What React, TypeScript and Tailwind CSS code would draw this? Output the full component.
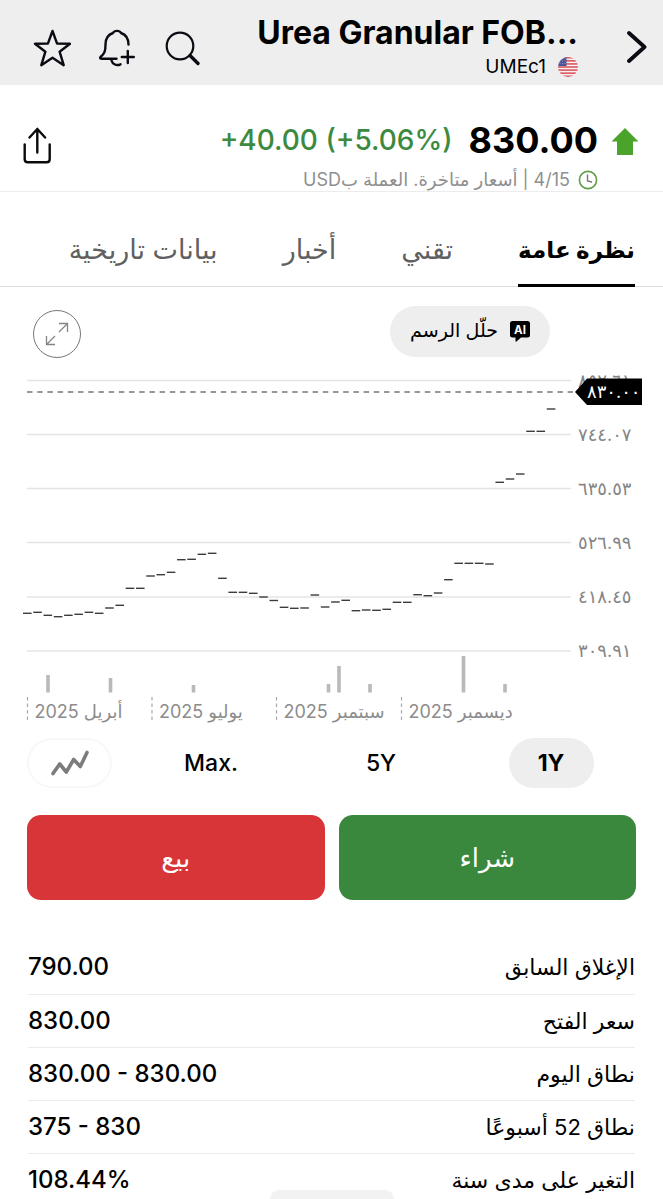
import React from "react";

const closes = [
  613.3, 612.3, 615.3, 616.7, 615.3, 614.3, 612.3, 613.3, 608, 605.3, 588.3, 588.3, 576, 574.7, 572.3, 559.7, 559.3,
  554.3, 553.3, 578.3, 592.3, 592.3, 593.3, 597, 600.5, 607.3, 608.3, 608, 595, 607, 602, 600.3, 610.7, 610, 610.3,
  609.3, 602.3, 602.3, 594.7, 595.7, 593, 579.7, 563.3, 563.3, 563.3, 564, 482.3, 479, 474, 431.3, 431.3, 409,
];

const volumes = [
  [48, 675], [110.5, 678], [193.5, 685], [328.5, 684], [339, 666], [370, 684], [463.5, 656], [505, 684],
];

const levels = [
  { y: 380.5, label: "٨٥٢.٦١" },
  { y: 434.5, label: "٧٤٤.٠٧" },
  { y: 488.5, label: "٦٣٥.٥٣" },
  { y: 542.5, label: "٥٢٦.٩٩" },
  { y: 597, label: "٤١٨.٤٥" },
  { y: 651, label: "٣٠٩.٩١" },
];

const months = [
  { x: 27.5, year: "2025", name: "أبريل" },
  { x: 152, year: "2025", name: "يوليو" },
  { x: 276.5, year: "2025", name: "سبتمبر" },
  { x: 401.5, year: "2025", name: "ديسمبر" },
];

const tabs = ["نظرة عامة", "تقني", "أخبار", "بيانات تاريخية"];

const stats = [
  ["الإغلاق السابق", "790.00"],
  ["سعر الفتح", "830.00"],
  ["نطاق اليوم", "830.00 - 830.00"],
  ["نطاق 52 أسبوعًا", "375 - 830"],
  ["التغير على مدى سنة", "108.44%"],
];

function Flag() {
  return (
    <svg viewBox="0 0 20 20" className="size-5" aria-hidden="true">
      <clipPath id="flag-round">
        <circle cx="10" cy="10" r="10" />
      </clipPath>
      <g clipPath="url(#flag-round)">
        <rect width="20" height="20" fill="#f6f1f2" />
        {[0, 1, 2, 3, 4, 5, 6].map((i) => (
          <rect key={i} y={i * 3.08} width="20" height="1.54" fill="#d9505a" />
        ))}
        <rect width="8.5" height="9" fill="#4a5596" />
        {[1.5, 4, 6.5].map((y) =>
          [2, 4.5, 7].map((x) => <circle key={`${x}-${y}`} cx={x} cy={y} r="0.45" fill="#dfe3f4" />),
        )}
      </g>
    </svg>
  );
}

function Header() {
  return (
    <header className="flex h-[85px] shrink-0 items-center bg-[#eeeeee] pr-4 pl-[33px]">
      <button aria-label="رجوع" className="mt-2 shrink-0">
        <svg viewBox="0 0 20 34" className="h-[34px] w-5" fill="none" stroke="#0b0b14" strokeWidth="3.8" strokeLinecap="round" strokeLinejoin="round">
          <path d="M2 3l15.5 14L2 31" />
        </svg>
      </button>
      <div dir="ltr" className="mr-[49px] flex min-w-0 flex-1 flex-col items-end pt-2">
        <h1 className="text-[32px] leading-10 font-bold whitespace-nowrap">Urea Granular FOB...</h1>
        <div className="flex items-center gap-3 text-[19px] leading-7">
          <span>UMEc1</span>
          <Flag />
        </div>
      </div>
      <div dir="ltr" className="mt-[10px] flex shrink-0 items-center gap-7">
        <button aria-label="إضافة إلى المفضلة">
          <svg viewBox="0 0 38 38" className="size-[38px]" fill="none" stroke="#0b0b14" strokeWidth="2.4" strokeLinejoin="round">
            <path d="M19.500 2l4.600 12.600 12.900.2-10.400 7.900 4.100 13.500-11.200-7.500-11.200 7.500 4.100-13.500L2 14.800l12.900-.2Z" />
          </svg>
        </button>
        <button aria-label="إضافة تنبيه">
          <svg viewBox="0 0 38 38" className="size-[38px]" fill="none" stroke="#0b0b14" strokeWidth="2.400" strokeLinecap="round" strokeLinejoin="round">
            <path d="M29.500 15.500c0-6-2.500-9.800-7.500-11.500-1.500-2.800-6.500-2.800-8 0-5 1.700-7.500 5.500-7.500 11.500 0 6.500-1 9-4.500 12-1.400 1.300-1 2.200.5 2.200h15" />
            <path d="M12.500 31.500c1 3.800 5 5.600 9 3.800" />
            <path d="M22.800 28h12M28.800 22v12" />
          </svg>
        </button>
        <button aria-label="بحث">
          <svg viewBox="0 0 38 38" className="size-[38px]" fill="none" stroke="#0b0b14" strokeLinecap="round">
            <circle cx="15" cy="17" r="13.300" strokeWidth="2.200" />
            <path d="M25 26.500l8 8" strokeWidth="3.400" />
          </svg>
        </button>
      </div>
    </header>
  );
}

function Quote() {
  return (
    <section className="flex h-[107px] items-start border-b border-[#ececec] pt-[34px] pr-6 pl-[22px]">
      <svg viewBox="0 0 28 28" className="mt-2 size-7 shrink-0" aria-hidden="true">
        <path d="M14 1L27.500 14.500H22V28H6V14.500H.5Z" fill="#4aa32b" />
      </svg>
      <div className="mr-[13px] flex flex-1 flex-col items-start">
        <div className="flex items-center gap-4">
          <span className="text-[36px] leading-[42px] font-bold">830.00</span>
          <span dir="ltr" className="text-[28px] leading-[42px] font-medium text-[#3c8a41]">+40.00 (+5.06%)</span>
        </div>
        <div className="flex items-center gap-2 text-[18px] leading-[38px] whitespace-nowrap text-[#8f8f8f]">
          <svg viewBox="0 0 20 20" className="size-5" fill="none" strokeLinecap="round" aria-hidden="true">
            <circle cx="10" cy="10" r="8.600" stroke="#5f9e46" strokeWidth="1.600" />
            <path d="M9.500 5v6l4 1" stroke="#777" strokeWidth="1.400" />
          </svg>
          <span>4/15 | أسعار متاخرة. العملة بUSD</span>
        </div>
      </div>
      <button aria-label="مشاركة" className="mt-2">
        <svg viewBox="0 0 30 38" className="h-[38px] w-[30px]" fill="none" stroke="#0b0b0b" strokeWidth="2.400" strokeLinecap="round" strokeLinejoin="round">
          <path d="M15.300 25.500V2M7.500 10.500L15.300 2l7.800 8.500" />
          <path d="M2.700 17.500v14.700q0 3 3 3h19q3 0 3-3V17.500" />
        </svg>
      </button>
    </section>
  );
}

function Tabs() {
  return (
    <nav className="flex h-[95px] gap-[65px] border-b border-[#dedede] px-7">
      {tabs.map((tab, i) => (
        <a
          key={tab}
          href="#"
          aria-current={i === 0 ? "page" : undefined}
          className={
            i === 0
              ? "-mb-px shrink-0 border-b-[3px] border-black pt-[38px] text-[23px] leading-10 font-bold whitespace-nowrap text-black"
              : "shrink-0 pt-[38px] text-[27px] leading-10 whitespace-nowrap text-[#606060]"
          }
        >
          {tab}
        </a>
      ))}
    </nav>
  );
}

function Chart() {
  return (
    <svg viewBox="0 366 663 358" className="block w-full" role="img" aria-label="Urea Granular FOB" direction="ltr">
      {levels.map(({ y, label }) => (
        <g key={y}>
          <path d={`M27 ${y}H571`} stroke="#e4e4e4" strokeWidth="1.600" />
          <text x="578" y={y + 6} fontSize="18" fill="#858585">{label}</text>
        </g>
      ))}
      <path d="M27 392H573" stroke="#777" strokeWidth="1.400" strokeDasharray="5.500 4.700" />
      {closes.map((y, i) => (
        <path key={i} d={`M${23 + i * 10.27} ${y}h8.600`} stroke="#3c3c3c" strokeWidth="1.400" />
      ))}
      {volumes.map(([x, y]) => (
        <path key={x} d={`M${x} ${y}V692.500`} stroke="#b9b9b9" strokeWidth="3.600" />
      ))}
      {months.map(({ x, year, name }) => (
        <g key={x} fontSize="18" fill="#8c8c8c">
          <path d={`M${x} 697V720`} stroke="#aaa" strokeWidth="1.200" strokeDasharray="3.500 3" />
          <text x={x + 7} y="717.500">{year} {name}</text>
        </g>
      ))}
      <path d="M575 392L587 378.500H642V405H587Z" fill="#000" />
      <text x="587" y="398" fontSize="18" fill="#fff">٨٣٠.٠٠</text>
    </svg>
  );
}

function ChartSection() {
  return (
    <section>
      <div className="flex h-[79px] items-start justify-between pt-[19px] pr-[113px] pl-[33px]">
        <button className="flex h-[51px] items-center gap-3 rounded-full bg-[#eeeeee] px-5 text-[19px] text-black">
          <svg viewBox="0 0 20 21" className="h-[21px] w-5" aria-hidden="true">
            <path d="M2.500 0h15q2.500 0 2.500 2.500v11.500q0 2.500-2.500 2.500H11l-4.500 4q-1 .5-1-.5v-3.500h-3q-2.500 0-2.500-2.500V2.500Q0 0 2.500 0Z" />
            <text x="10" y="12.500" fontSize="11.500" fontWeight="700" textAnchor="middle" fill="#fff">AI</text>
          </svg>
          <span>حلّل الرسم</span>
        </button>
        <button aria-label="توسيع الرسم" className="mt-1 flex size-12 items-center justify-center rounded-full border border-[#777777]">
          <svg viewBox="0 0 24 24" className="size-6" fill="none" stroke="#858585" strokeWidth="1.300">
            <path d="M14 10l8.500-8.500M14 1.500h8.500V10M10 14l-8.500 8.500M1.500 14v8.500H10" />
          </svg>
        </button>
      </div>
      <Chart />
    </section>
  );
}

function Periods() {
  return (
    <div className="mt-[14px] flex items-center gap-[14px] px-[27px] text-[23px] font-medium">
      <div className="flex flex-1">
        <div className="flex flex-1 justify-center">
          <button className="h-[50px] w-[85px] rounded-full bg-[#eeeeee] font-bold">1Y</button>
        </div>
        <div className="flex flex-1 justify-center">
          <button className="h-[50px] w-[85px] rounded-full">5Y</button>
        </div>
        <div className="flex flex-1 justify-center">
          <button dir="ltr" className="h-[50px] w-[85px] rounded-full">Max.</button>
        </div>
      </div>
      <button aria-label="نوع الرسم" className="flex h-[50px] w-[85px] items-center justify-center rounded-full border-2 border-[#f8f8f8]">
        <svg viewBox="0 0 38 26" className="h-[26px] w-[38px]" fill="none" stroke="#7c7c7c" strokeWidth="3.600" strokeLinecap="round" strokeLinejoin="round">
          <path d="M2 23.500l6.700-9.500 6.600 8 7.400-12.500 6.600 7L36 2.500" />
        </svg>
      </button>
    </div>
  );
}

function Stats() {
  return (
    <div className="px-7 pt-[41px]">
      <table className="w-full">
        <tbody>
          {stats.map(([label, value]) => (
            <tr key={label} className="h-[53px] border-b border-[#ebebeb]">
              <th scope="row" className="text-right text-[22px] leading-8 font-normal">{label}</th>
              <td dir="ltr" className="text-left text-[24px] leading-8 font-medium">{value}</td>
            </tr>
          ))}
        </tbody>
      </table>
    </div>
  );
}

export default function App() {
  return (
    <div
      dir="rtl"
      lang="ar"
      className="flex h-screen flex-col bg-white font-[Inter,'DejaVu_Sans',sans-serif] text-black"
    >
      <Header />
      <main className="min-h-0 flex-1 overflow-y-auto [scrollbar-width:none]">
        <Quote />
        <Tabs />
        <ChartSection />
        <Periods />
        <div className="mt-[27px] grid grid-cols-2 gap-[14px] px-[27px] text-[26px] font-medium text-white">
          <button className="h-[85px] rounded-[14px] bg-[#39883e]">شراء</button>
          <button className="h-[85px] rounded-[14px] bg-[#d73538]">بيع</button>
        </div>
        <Stats />
      </main>
      <div className="fixed bottom-0 left-1/2 h-[9px] w-[124px] -translate-x-1/2 rounded-t-full bg-[#f2f2f2]" />
    </div>
  );
}
